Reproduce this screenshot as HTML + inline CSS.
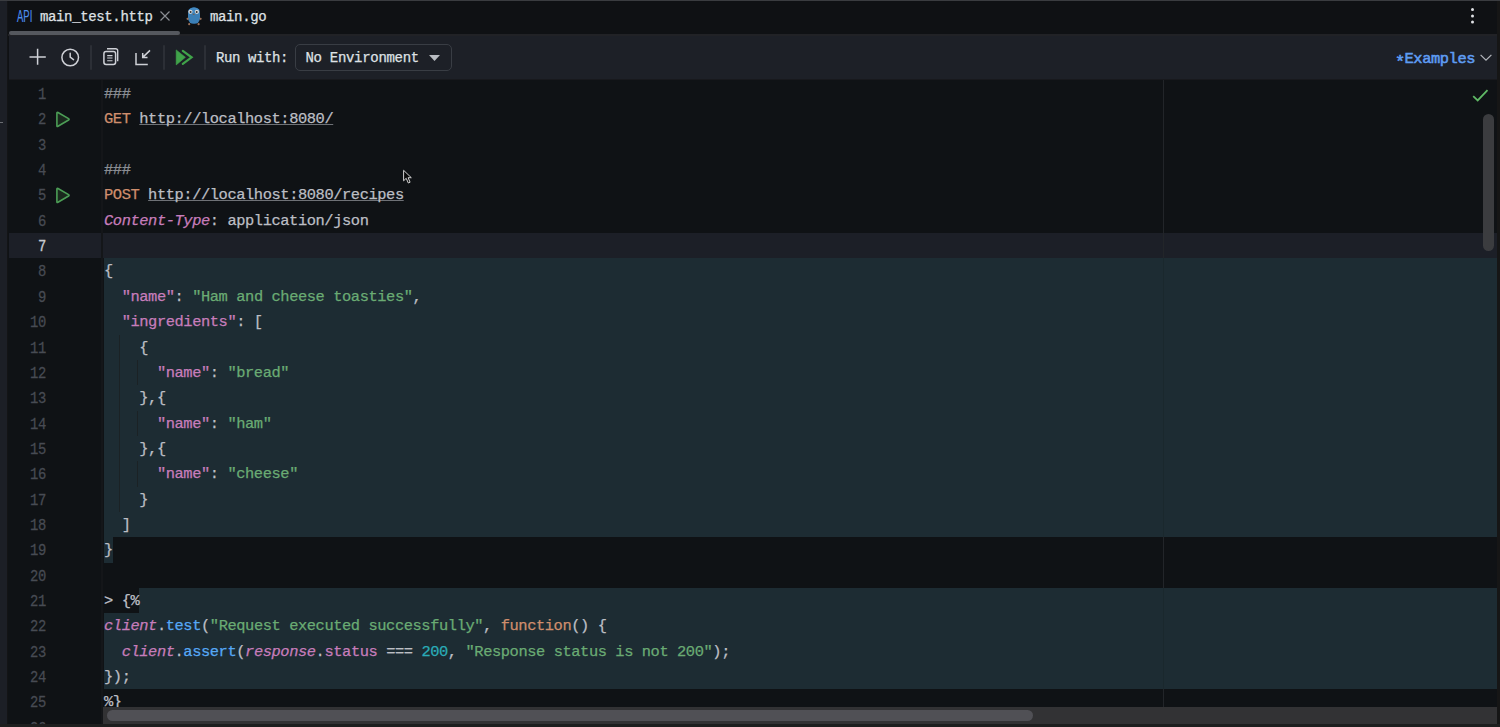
<!DOCTYPE html>
<html><head><meta charset="utf-8"><style>
*{margin:0;padding:0;box-sizing:border-box}
html,body{width:1500px;height:727px;overflow:hidden;background:#0f1114}
body{position:relative;font-family:"Liberation Mono",monospace}
.abs{position:absolute}
#topborder{position:absolute;left:0;top:0;width:1500px;height:1px;background:#3a3c40}
#leftstrip{position:absolute;left:0;top:1px;width:7px;height:723px;background:#1c1f26}
#leftborder{position:absolute;left:7px;top:1px;width:1px;height:723px;background:#131416}
#rightstrip{position:absolute;left:1497px;top:1px;width:3px;height:726px;background:#161616}
#bottomstrip{position:absolute;left:0;top:724px;width:1500px;height:3px;background:#1d1e1e}
#tabbar{position:absolute;left:8px;top:1px;width:1489px;height:35px;background:#0f1114}
.tabtxt{position:absolute;top:1px;height:33px;line-height:32px;font-size:14px;letter-spacing:-0.36px;color:#dfe1e5;-webkit-text-stroke:0.25px currentColor}
#tabline{position:absolute;left:9px;top:31px;width:171px;height:4px;border-radius:2px;background:#55585e}
#tabsep{position:absolute;left:8px;top:34px;width:1489px;height:2px;background:#212226}
#toolbar{position:absolute;left:9px;top:36px;width:1488px;height:44px;background:#1d2027;box-shadow:inset 0 -1px 0 #18191d}
.sep{position:absolute;top:45px;width:2px;height:25px;background:#2c2f36;border-radius:1px}
.tbtxt{position:absolute;font-size:14px;letter-spacing:-0.4px;color:#dfe1e5;line-height:20px;-webkit-text-stroke:0.25px currentColor}
#env{position:absolute;left:295px;top:44px;width:157px;height:27px;border:1.5px solid #393d44;border-radius:5px}
#editor{position:absolute;left:8px;top:80px;width:1489px;height:644px;background:#0f1215;overflow:hidden}
.curline{position:absolute;left:9px;width:1488px;background:#1c1f27}
.teal{position:absolute;background:#1d2c33}
.guide{position:absolute;width:1px;background:#1b2225}
.ln{position:absolute;left:104px;height:25.35px;line-height:25.35px;font-size:15.4px;letter-spacing:-0.421px;padding-top:1.0px;-webkit-text-stroke:0.25px currentColor;white-space:pre;color:#bcbec4}
.num{position:absolute;left:10px;width:36px;text-align:right;height:25.35px;line-height:25.35px;font-size:15.4px;letter-spacing:-0.421px;padding-top:1.5px;transform:scale(0.9,1.08);transform-origin:35.5px 13px;-webkit-text-stroke:0.25px currentColor;color:#474b53}
.num.cur{color:#c8cad0}
.c{color:#8a8d93}
.k{color:#cf8e6d}
.u{color:#bcbec4;text-decoration:underline;text-underline-offset:1px;text-decoration-thickness:1px;text-decoration-skip-ink:none;text-decoration-color:#6e7176}
.p{color:#c77dbb;font-style:italic}
.pi{color:#c77dbb;font-style:italic}
.pl{color:#c77dbb}
.j{color:#c77dbb}
.s{color:#6aab73}
.f{color:#56a8f5}
.n{color:#2aacb8}
#gutline{position:absolute;left:101px;top:80px;width:2px;height:644px;background:#141619}
#margin{position:absolute;left:1163px;top:80px;width:1px;height:627px;background:#222529}
#vthumb{position:absolute;left:1483px;top:114px;width:11px;height:137px;border-radius:6px;background:#3b3c3f}
#htrack{position:absolute;left:103px;top:707px;width:1394px;height:17px;background:#323234}
#hthumb{position:absolute;left:107px;top:710px;width:926px;height:11px;border-radius:6px;background:#505055}
</style></head><body>
<div id="topborder"></div>
<div id="tabbar"></div>
<div class="tabtxt" style="left:16.5px;color:#4d8ef0;font-family:'Liberation Sans',sans-serif;font-size:17px;letter-spacing:0px;transform:scaleX(0.56);transform-origin:0 0;-webkit-text-stroke:0.15px currentColor;top:1px">API</div>
<div class="tabtxt" style="left:40px">main_test.http</div>
<svg class="abs" style="left:159px;top:10px" width="12" height="12" viewBox="0 0 12 12"><path d="M1.5 1.5L10.5 10.5M10.5 1.5L1.5 10.5" stroke="#8a8d93" stroke-width="1.2"/></svg>
<svg class="abs" style="left:186px;top:6px" width="16" height="20" viewBox="0 0 16 20">
 <rect x="2" y="1.6" width="12" height="16.2" rx="5.6" fill="#3b7fb6"/>
 <ellipse cx="8" cy="5" rx="5.5" ry="3.4" fill="#4289c2"/>
 <circle cx="4.4" cy="5.8" r="2.1" fill="#d9d9d9"/><circle cx="10.9" cy="5.8" r="2.1" fill="#d9d9d9"/>
 <circle cx="4.6" cy="5.9" r="1" fill="#333"/><circle cx="10.7" cy="5.9" r="1" fill="#333"/>
 <ellipse cx="7.7" cy="8.2" rx="1.1" ry="0.8" fill="#6f5f55"/>
 <circle cx="1.6" cy="12.8" r="1.1" fill="#9a7058"/><circle cx="14.6" cy="12.8" r="1.1" fill="#9a7058"/>
 <circle cx="3.2" cy="18.2" r="1.1" fill="#9a7058"/><circle cx="12.6" cy="18.2" r="1.1" fill="#9a7058"/>
</svg>
<div class="tabtxt" style="left:210px">main.go</div>
<svg class="abs" style="left:1469px;top:6px" width="8" height="20" viewBox="0 0 8 20"><circle cx="3.5" cy="3.6" r="1.5" fill="#dfe1e5"/><circle cx="3.5" cy="10" r="1.5" fill="#dfe1e5"/><circle cx="3.5" cy="16" r="1.5" fill="#dfe1e5"/></svg>
<div id="tabsep"></div>
<div id="tabline"></div>
<div id="toolbar"></div>
<svg class="abs" style="left:28px;top:48px" width="20" height="18" viewBox="0 0 20 18"><path d="M1.5 9H17.8M9.6 0.8V16.7" stroke="#ced0d6" stroke-width="1.5"/></svg>
<svg class="abs" style="left:60px;top:47px" width="21" height="21" viewBox="0 0 21 21"><circle cx="10.2" cy="10.5" r="8.3" fill="none" stroke="#ced0d6" stroke-width="1.5"/><path d="M10.2 6.3V10.2L13.5 12.6" fill="none" stroke="#ced0d6" stroke-width="1.5" stroke-linecap="round"/></svg>
<div class="sep" style="left:90px"></div>
<svg class="abs" style="left:100px;top:46px" width="22" height="22" viewBox="0 0 22 22"><path d="M7 2.7H15.7A2 2 0 0 1 17.7 4.7V15.2" fill="none" stroke="#ced0d6" stroke-width="1.4"/><rect x="3.9" y="5.6" width="11.7" height="12.9" rx="2.2" fill="none" stroke="#ced0d6" stroke-width="1.5"/><path d="M7.2 9.6H12.5M7.2 12H12.5M7.2 14.7H12.5" stroke="#ced0d6" stroke-width="1.1"/></svg>
<svg class="abs" style="left:132px;top:46px" width="22" height="22" viewBox="0 0 22 22"><path d="M4 7V18.4H15.8" fill="none" stroke="#ced0d6" stroke-width="1.5"/><path d="M18 4.4L10.7 11.4M10.7 7V11.4H15.5" fill="none" stroke="#ced0d6" stroke-width="1.5"/></svg>
<div class="sep" style="left:163px"></div>
<svg class="abs" style="left:174px;top:48px" width="22" height="18" viewBox="0 0 22 18"><path d="M2.2 1.9L11.4 9.3L2.2 16.9Z" fill="#40a34a" stroke="#40a34a" stroke-width="0.6" stroke-linejoin="round"/><path d="M8.8 2.9L17.6 9.3L8.8 15.9" fill="none" stroke="#40a34a" stroke-width="2.2" stroke-linecap="round"/></svg>
<div class="sep" style="left:204px"></div>
<div class="tbtxt" style="left:216px;top:48px">Run with:</div>
<div id="env"></div>
<div class="tbtxt" style="left:305.5px;top:48px;letter-spacing:-0.3px">No Environment</div>
<svg class="abs" style="left:428px;top:54px" width="13" height="8" viewBox="0 0 13 8"><path d="M1 1H12L6.5 7Z" fill="#b9bcc2"/></svg>
<div class="tbtxt" style="left:1395px;top:53px;color:#5e9cf2;font-size:17px;letter-spacing:-0.42px;-webkit-text-stroke:0.6px currentColor">*</div><div class="tbtxt" style="left:1404.5px;top:49px;color:#5e9cf2;font-size:15.4px;letter-spacing:-0.42px;-webkit-text-stroke:0.55px currentColor">Examples</div>
<svg class="abs" style="left:1479px;top:53px" width="14" height="10" viewBox="0 0 14 10"><path d="M1.6 1.8L7 7.2L12.4 1.8" fill="none" stroke="#b4b7bd" stroke-width="1.2"/></svg>

<div id="editor"></div>
<div class="curline" style="top:233.10px;height:25.35px"></div>
<div id="margin"></div>
<div class="teal" style="left:104.00px;top:258.45px;width:1393.00px;height:278.85px"></div><div class="teal" style="left:104.00px;top:537.30px;width:8.80px;height:25.35px"></div><div class="teal" style="left:139.20px;top:588.00px;width:1357.80px;height:25.35px"></div><div class="teal" style="left:104.00px;top:613.35px;width:1393.00px;height:76.05px"></div>
<div class="guide" style="left:119px;top:334.50px;height:177.45px"></div><div class="guide" style="left:137px;top:359.85px;height:25.35px"></div><div class="guide" style="left:137px;top:410.55px;height:25.35px"></div><div class="guide" style="left:137px;top:461.25px;height:25.35px"></div>
<div id="gutline"></div>
<div class="abs" style="left:1163px;top:258.45px;width:1px;height:278.85px;background:#1a282d"></div>
<div class="abs" style="left:1163px;top:588.00px;width:1px;height:101.40px;background:#1a282d"></div>
<div class="num" style="top:81.00px">1</div>
<div class="num" style="top:106.35px">2</div>
<div class="num" style="top:131.70px">3</div>
<div class="num" style="top:157.05px">4</div>
<div class="num" style="top:182.40px">5</div>
<div class="num" style="top:207.75px">6</div>
<div class="num cur" style="top:233.10px">7</div>
<div class="num" style="top:258.45px">8</div>
<div class="num" style="top:283.80px">9</div>
<div class="num" style="top:309.15px">10</div>
<div class="num" style="top:334.50px">11</div>
<div class="num" style="top:359.85px">12</div>
<div class="num" style="top:385.20px">13</div>
<div class="num" style="top:410.55px">14</div>
<div class="num" style="top:435.90px">15</div>
<div class="num" style="top:461.25px">16</div>
<div class="num" style="top:486.60px">17</div>
<div class="num" style="top:511.95px">18</div>
<div class="num" style="top:537.30px">19</div>
<div class="num" style="top:562.65px">20</div>
<div class="num" style="top:588.00px">21</div>
<div class="num" style="top:613.35px">22</div>
<div class="num" style="top:638.70px">23</div>
<div class="num" style="top:664.05px">24</div>
<div class="num" style="top:689.40px">25</div>
<div class="num" style="top:714.75px">26</div>

<div class="ln" style="top:81.00px"><span class="c">###</span></div>
<div class="ln" style="top:106.35px"><span class="k">GET</span><span class="d"> </span><span class="u">http://localhost:8080/</span></div>
<div class="ln" style="top:131.70px"></div>
<div class="ln" style="top:157.05px"><span class="c">###</span></div>
<div class="ln" style="top:182.40px"><span class="k">POST</span><span class="d"> </span><span class="u">http://localhost:8080/recipes</span></div>
<div class="ln" style="top:207.75px"><span class="p">Content-Type</span><span class="d">: application/json</span></div>
<div class="ln" style="top:233.10px"></div>
<div class="ln" style="top:258.45px"><span class="d">{</span></div>
<div class="ln" style="top:283.80px"><span class="d">  </span><span class="j">"name"</span><span class="d">: </span><span class="s">"Ham and cheese toasties"</span><span class="d">,</span></div>
<div class="ln" style="top:309.15px"><span class="d">  </span><span class="j">"ingredients"</span><span class="d">: [</span></div>
<div class="ln" style="top:334.50px"><span class="d">    {</span></div>
<div class="ln" style="top:359.85px"><span class="d">      </span><span class="j">"name"</span><span class="d">: </span><span class="s">"bread"</span></div>
<div class="ln" style="top:385.20px"><span class="d">    },{</span></div>
<div class="ln" style="top:410.55px"><span class="d">      </span><span class="j">"name"</span><span class="d">: </span><span class="s">"ham"</span></div>
<div class="ln" style="top:435.90px"><span class="d">    },{</span></div>
<div class="ln" style="top:461.25px"><span class="d">      </span><span class="j">"name"</span><span class="d">: </span><span class="s">"cheese"</span></div>
<div class="ln" style="top:486.60px"><span class="d">    }</span></div>
<div class="ln" style="top:511.95px"><span class="d">  ]</span></div>
<div class="ln" style="top:537.30px"><span class="d">}</span></div>
<div class="ln" style="top:562.65px"></div>
<div class="ln" style="top:588.00px"><span class="d">&gt; {%</span></div>
<div class="ln" style="top:613.35px"><span class="pi">client</span><span class="d">.</span><span class="f">test</span><span class="d">(</span><span class="s">"Request executed successfully"</span><span class="d">, </span><span class="k">function</span><span class="d">() {</span></div>
<div class="ln" style="top:638.70px"><span class="d">  </span><span class="pi">client</span><span class="d">.</span><span class="f">assert</span><span class="d">(</span><span class="pi">response</span><span class="d">.</span><span class="pl">status</span><span class="d"> === </span><span class="n">200</span><span class="d">, </span><span class="s">"Response status is not 200"</span><span class="d">);</span></div>
<div class="ln" style="top:664.05px"><span class="d">});</span></div>
<div class="ln" style="top:689.40px"><span class="d">%}</span></div>
<div class="ln" style="top:714.75px"><span class="d"></span></div>

<svg class="abs" style="left:54px;top:110px" width="18" height="19" viewBox="0 0 18 19"><path d="M2.9 3.1Q2.9 1.9 4 2.5L14.6 8.6Q15.6 9.3 14.6 10L4 16.3Q2.9 16.9 2.9 15.7Z" fill="#1a281d" stroke="#4c9d56" stroke-width="1.6" stroke-linejoin="round"/></svg>
<svg class="abs" style="left:54px;top:186px" width="18" height="19" viewBox="0 0 18 19"><path d="M2.9 3.1Q2.9 1.9 4 2.5L14.6 8.6Q15.6 9.3 14.6 10L4 16.3Q2.9 16.9 2.9 15.7Z" fill="#1a281d" stroke="#4c9d56" stroke-width="1.6" stroke-linejoin="round"/></svg>
<svg class="abs" style="left:1471px;top:88px" width="18" height="15" viewBox="0 0 18 15"><path d="M2.2 8.2L6.7 12.4L16.5 2.2" fill="none" stroke="#5fb865" stroke-width="1.8"/></svg>
<svg class="abs" style="left:400px;top:167px" width="16" height="20" viewBox="0 0 16 20"><path d="M3.6 3.3V13.8L6.2 11.3L8.3 16L10.1 15.2L8.1 10.7H11.3Z" fill="#0a0a0a" stroke="#d2d2d2" stroke-width="1" stroke-linejoin="round"/></svg>
<div id="vthumb"></div>
<div id="htrack"></div>
<div id="hthumb"></div>
<div id="leftstrip"></div>
<div id="leftborder"></div>
<div class="abs" style="left:0;top:122px;width:3px;height:1px;background:#6a6d72"></div>
<div id="rightstrip"></div>
<div id="bottomstrip"></div>
</body></html>
